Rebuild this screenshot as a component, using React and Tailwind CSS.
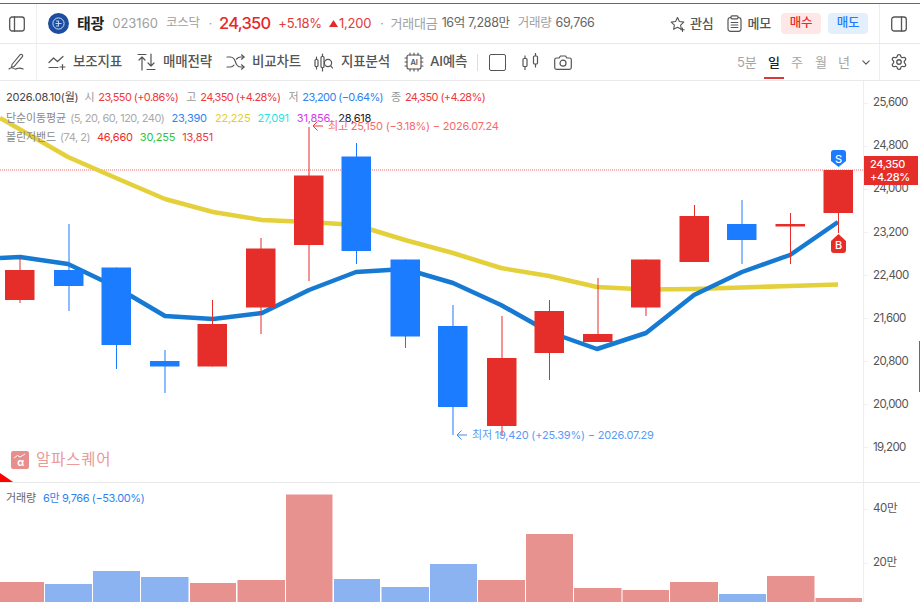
import React from "react";

const R = "#e52d29";
const B = "#1c7cff";
const candles = [
  [5, 270, 300, 258, 303, "r"], [54, 270, 286, 224, 311, "b"], [101.5, 267.5, 345, 267.5, 369, "b"],
  [150, 361, 366.5, 350, 393, "b"], [197.5, 324, 366.5, 300, 366.5, "r"], [246, 248.5, 307.5, 238, 334, "r"],
  [294, 175.5, 245, 127, 281, "r"], [341.5, 156.5, 251, 143, 264, "b"], [390.5, 259.5, 336.5, 259.5, 348, "b"],
  [438, 326, 407, 305, 435, "b"], [487, 358, 426, 316, 436, "r"], [534.5, 311, 353, 300, 380, "r"],
  [583, 334, 342, 278, 342, "r"], [631, 259.5, 307.5, 259.5, 316, "r"], [679.5, 216, 262, 205, 262, "r"],
  [727, 224, 240, 200, 264, "b"], [775.5, 224, 226.5, 213, 264, "r"], [823.5, 170, 213, 170, 233, "r"],
];
const vols = [
  [0, 44, 582, "r"], [45, 47, 584, "b"], [93, 47, 571, "b"], [141, 47.5, 577, "b"], [190, 46, 583, "r"], [237.5, 47.5, 580, "r"],
  [286, 46.5, 494.5, "r"], [334, 46, 579, "b"], [381.5, 47.5, 587, "b"], [430, 47, 564, "b"], [478, 47, 580, "r"], [526, 47, 534, "r"],
  [574, 47.5, 588, "r"], [622.5, 46.5, 590, "r"], [670, 48, 582, "r"], [719, 47, 594, "b"], [767, 47.5, 576, "r"], [815.5, 46.5, 598, "r"],
];
const yellow = "0,118 68,157 116,178 165,199 213,212 262,220 309,222 356,225 405,240 453,253 501,268 549,276 597,287 646,289.5 694,289 742,287.5 790,286 838,284.5";
const blue = "0,258 20,257 68,264 116,287 165,316 213,319 262,313 309,290 356,272 405,269 453,283 501,305 549,332 597,349 646,333 694,295 742,272 790,255 838,222";
const priceTicks = ["25,600", "24,800", "24,000", "23,200", "22,400", "21,600", "20,800", "20,000", "19,200"];

const Ic = ({ w = 18, h = 18, vb = "0 0 18 18", children, className = "" }) => (
  <svg width={w} height={h} viewBox={vb} fill="none" stroke="#555" strokeWidth="1.2" strokeLinecap="round" strokeLinejoin="round" className={`shrink-0 ${className}`}>{children}</svg>
);

const PanelIcon = ({ right }) => (
  <Ic w={16} h={16} vb="0 0 16 16">
    <rect x="0.7" y="1" width="14.6" height="14" rx="2.5" strokeWidth="1.3" />
    <path d={right ? "M10.5 1v14" : "M5.5 1v14"} strokeWidth="1.3" />
  </Ic>
);

const Tool = ({ icon, label, cls }) => (
  <div className={`flex items-center ${cls}`}>
    {icon}
    <span className="text-[13.5px] font-medium text-[#555] whitespace-nowrap leading-none">{label}</span>
  </div>
);

const Leg = ({ c, children, cls = "" }) => <span className={`whitespace-nowrap ${cls}`} style={{ color: c }}>{children}</span>;

export default function App() {
  return (
    <div className="relative w-[920px] h-[602px] overflow-hidden bg-white flex flex-col font-[Inter,'Noto_Sans_CJK_KR',sans-serif] tracking-[-0.2px]">
      <div className="mt-[3px] h-px bg-[#d8393a] shrink-0" />
      {/* row 1 */}
      <div className="h-[40px] shrink-0 flex border-b border-[#e8e8e8]">
        <div className="w-[37px] border-r border-[#eeeeee] flex items-center justify-center pr-[3px]"><PanelIcon /></div>
        <div className="flex-1 flex items-center pl-[11px]">
          <svg width="21" height="21" viewBox="0 0 21 21" className="shrink-0">
            <circle cx="10.5" cy="10.5" r="10.5" fill="#1c4da1" />
            <circle cx="10.5" cy="10.5" r="5.6" fill="none" stroke="#cfe0f5" strokeWidth="1" />
            <path d="M7.5 10.5h6M10.5 7.5v6M8 8h2M8 13h2" stroke="#cfe0f5" strokeWidth="0.9" fill="none" />
          </svg>
          <span className="ml-[8px] text-[15px] font-semibold text-[#222] leading-none whitespace-nowrap">태광</span>
          <span className="ml-[8px] text-[13px] text-[#a0a0a0] leading-none whitespace-nowrap tracking-normal">023160</span>
          <span className="ml-[8px] text-[12.5px] text-[#a0a0a0] leading-none whitespace-nowrap">코스닥</span>
          <span className="ml-[9px] text-[12px] text-[#999] leading-none">·</span>
          <span className="ml-[7px] text-[16.5px] font-medium text-[#e5282a] leading-none whitespace-nowrap tracking-[-0.8px]">24,350</span>
          <span className="ml-[8px] text-[13px] text-[#e5383a] leading-none whitespace-nowrap">+5.18%</span>
          <svg width="9" height="7" viewBox="0 0 9 7" className="ml-[7px] mr-[1px] shrink-0"><path d="M4.5 0L9 7H0z" fill="#e5282a" /></svg>
          <span className="text-[13px] text-[#e5383a] leading-none whitespace-nowrap">1,200</span>
          <span className="ml-[9px] text-[12px] text-[#999] leading-none">·</span>
          <span className="ml-[7px] text-[13px] text-[#a0a0a0] leading-none whitespace-nowrap">거래대금</span>
          <span className="ml-[4px] text-[12.5px] text-[#666] leading-none whitespace-nowrap tracking-[-0.35px]">16억 7,288만</span>
          <span className="ml-[8px] text-[12.5px] text-[#a0a0a0] leading-none whitespace-nowrap">거래량</span>
          <span className="ml-[4px] text-[12.5px] text-[#666] leading-none whitespace-nowrap tracking-[-0.35px]">69,766</span>
          <div className="ml-auto flex items-center">
            <svg width="16" height="16" viewBox="0 0 16 16" fill="none" stroke="#555" strokeWidth="1.1" strokeLinejoin="round" strokeLinecap="round" className="shrink-0">
              <path d="M7.5 1.5l1.9 4 4.4.6-3.2 3 .8 4.2-3.9-2.1-3.9 2.1.8-4.2-3.2-3 4.4-.6z" />
              <path d="M12.5 12v3.4M10.8 13.7h3.4" />
            </svg>
            <span className="ml-[4px] text-[13px] font-medium text-[#555] leading-none">관심</span>
            <svg width="15" height="17" viewBox="0 0 15 17" fill="none" stroke="#555" strokeWidth="1.2" strokeLinecap="round" className="ml-[14px] shrink-0">
              <rect x="1" y="2.5" width="13" height="13.8" rx="2.5" />
              <rect x="4" y="0.8" width="7" height="3" rx="1" fill="#fff" />
              <path d="M4.2 7.5h6.6M4.2 10h6.6M4.2 12.5h6.6" />
            </svg>
            <span className="ml-[5px] text-[13px] font-medium text-[#555] leading-none">메모</span>
            <div className="ml-[10px] w-[40px] h-[21px] rounded-[4px] bg-[#fde8e7] flex items-center justify-center text-[12.5px] font-medium text-[#f0292c]">매수</div>
            <div className="ml-[7px] mr-[11px] w-[40px] h-[21px] rounded-[4px] bg-[#e3effd] flex items-center justify-center text-[12.5px] font-medium text-[#1c7cff]">매도</div>
          </div>
        </div>
        <div className="w-[41px] border-l border-[#eeeeee] flex items-center justify-center pr-[2px]"><PanelIcon right /></div>
      </div>
      {/* row 2 */}
      <div className="h-[37px] shrink-0 flex border-b border-[#e8e8e8] relative">
        <div className="w-[37px] border-r border-[#eeeeee] flex items-center justify-center pr-[3px]">
          <svg width="17" height="18" viewBox="0 0 17 18" fill="none" stroke="#555" strokeWidth="1.1" strokeLinecap="round" strokeLinejoin="round">
            <path d="M4 11.5L12.2 1.6a1.2 1.2 0 0 1 1.7-.1l.4.4a1.2 1.2 0 0 1 .1 1.7L6.2 13.4l-2.7.9z" />
            <path d="M1 16c2-1.6 3.4-1.6 4.6-.6 1.2.9 2.4.9 3.6.2 1.2-.6 3-.7 6 .4" />
          </svg>
        </div>
        <div className="flex-1 flex items-center pl-[11px]">
          <Tool cls="w-[89px]" label="보조지표" icon={
            <Ic w={18} h={16} vb="0 0 18 16" className="mr-[7px]">
              <path d="M1 8.5l4.5-4.5 4 3.5L15 2.5" /><path d="M1 13.5h9" /><path d="M14.5 10.5v5M12 13h5" />
            </Ic>} />
          <Tool cls="w-[89px]" label="매매전략" icon={
            <Ic w={20} h={18} vb="0 0 20 18" className="mr-[6px]">
              <path d="M1 1.5h8" /><path d="M5 4v13M2 7l3-3 3 3" /><path d="M14 1v12M11 10l3 3 3-3" /><path d="M10 16.5h8" />
            </Ic>} />
          <Tool cls="w-[88px]" label="비교차트" icon={
            <Ic w={19} h={16} vb="0 0 19 16" className="mr-[7px]">
              <path d="M1 3h3.5c2 0 3 1 4 2.5l2 5c1 1.5 2 2.5 4 2.5H18" /><path d="M1 13h3.5c1.6 0 2.6-.7 3.5-1.8M10.6 5c1-1.2 2-2 3.9-2H18" /><path d="M15.5.8L18 3l-2.5 2.2M15.5 10.8L18 13l-2.5 2.2" />
            </Ic>} />
          <Tool cls="w-[90px]" label="지표분석" icon={
            <Ic w={19} h={19} vb="0 0 19 19" className="mr-[8px]">
              <rect x="1" y="6.5" width="3" height="7" rx="1" /><path d="M2.5 4v2.5M2.5 13.5V16" />
              <rect x="7" y="3.5" width="3" height="11" rx="1" /><path d="M8.5 1v2.5M8.5 14.5V18" />
              <circle cx="14" cy="10" r="3.6" /><path d="M16.6 12.6L18.5 15" />
            </Ic>} />
          <Tool cls="w-[73px]" label="AI예측" icon={
            <svg width="20" height="20" viewBox="0 0 20 20" fill="none" stroke="#555" strokeWidth="1.1" strokeLinecap="round" className="mr-[6px] shrink-0">
              <rect x="3" y="3" width="14" height="14" rx="2" />
              <path d="M6 1v2M10 1v2M14 1v2M6 17v2M10 17v2M14 17v2M1 6h2M1 10h2M1 14h2M17 6h2M17 10h2M17 14h2" />
              <text x="10" y="13" textAnchor="middle" fontSize="7.5" fontWeight="600" fill="#555" stroke="none">AI</text>
            </svg>} />
          <div className="w-px h-[17px] bg-[#dddddd]" />
          <div className="ml-[11px] w-[17px] h-[17px] rounded-[2px] border-[1.3px] border-[#555]" />
          <svg width="17" height="18" viewBox="0 0 17 18" fill="none" stroke="#555" strokeWidth="1.2" className="ml-[16px] shrink-0">
            <rect x="1" y="5.5" width="4" height="8" rx="1" /><path d="M3 2.5v3M3 13.5v3.5" />
            <rect x="11.5" y="3" width="4" height="8" rx="1" /><path d="M13.5 0v3M13.5 11v3.5" />
          </svg>
          <svg width="18" height="15" viewBox="0 0 18 15" fill="none" stroke="#555" strokeWidth="1.2" strokeLinejoin="round" className="ml-[15px] shrink-0">
            <path d="M2.5 3h2.7l1.2-2h5.2l1.2 2h2.7A1.8 1.8 0 0 1 17.3 4.8v7.7a1.8 1.8 0 0 1-1.8 1.8h-13A1.8 1.8 0 0 1 .7 12.5V4.8A1.8 1.8 0 0 1 2.5 3z" />
            <circle cx="9" cy="8.2" r="3" />
          </svg>
          <div className="ml-auto flex items-center text-[13px] leading-none mr-[9px]">
            <span className="w-[20px] text-[#a5a5a5] whitespace-nowrap">5분</span>
            <span className="ml-[11px] w-[12px] text-[#222] font-medium relative">일<span className="absolute left-[-4px] top-[21.5px] w-[20px] h-[2px] bg-[#d8393a]" /></span>
            <span className="ml-[11px] w-[12px] text-[#a5a5a5]">주</span>
            <span className="ml-[12px] w-[12px] text-[#a5a5a5]">월</span>
            <span className="ml-[11px] w-[12px] text-[#a5a5a5]">년</span>
            <svg width="8" height="5" viewBox="0 0 10 6" fill="none" stroke="#555" strokeWidth="1.4" strokeLinecap="round" strokeLinejoin="round" className="ml-[12px]"><path d="M1 1l4 4 4-4" /></svg>
          </div>
        </div>
        <div className="w-[41px] border-l border-[#eeeeee] flex items-center justify-center pr-[2px]">
          <svg width="18" height="18" viewBox="0 0 24 24" fill="none" stroke="#555" strokeWidth="1.7" strokeLinecap="round" strokeLinejoin="round">
            <path d="M9.671 4.136a2.34 2.34 0 0 1 4.659 0 2.34 2.34 0 0 0 3.319 1.915 2.34 2.34 0 0 1 2.33 4.033 2.34 2.34 0 0 0 0 3.831 2.34 2.34 0 0 1-2.33 4.033 2.34 2.34 0 0 0-3.319 1.915 2.34 2.34 0 0 1-4.659 0 2.34 2.34 0 0 0-3.32-1.915 2.34 2.34 0 0 1-2.33-4.033 2.34 2.34 0 0 0 0-3.831A2.34 2.34 0 0 1 6.35 6.051a2.34 2.34 0 0 0 3.319-1.915" />
            <circle cx="12" cy="12" r="3" />
          </svg>
        </div>
      </div>
      {/* price pane */}
      <div className="h-[401px] shrink-0 flex border-b border-[#e8e8e8] box-content">
        <div className="relative w-[863px] shrink-0">
          <svg width="863" height="401" viewBox="0 81 863 401" className="block">
            <path d="M0 473L13 482H0z" fill="#ff0000" />
            <path d="M0 170H863" stroke="#ee6a6a" strokeWidth="1" strokeDasharray="1 1" />
            <polyline points={yellow} fill="none" stroke="#e4d03a" strokeWidth="4.5" strokeLinejoin="round" />
            <polyline points={blue} fill="none" stroke="#1679d2" strokeWidth="4.5" strokeLinejoin="round" />
            {candles.map(([x, t, b, wt, wb, c], i) => {
              const col = c === "r" ? R : B;
              return (
                <g key={i}>
                  <rect x={x + 14.5} y={wt} width="1" height={wb - wt} fill={col} />
                  <rect x={x} y={t} width="29.5" height={b - t} fill={col} />
                </g>
              );
            })}
            <path d="M313 126h10M317.5 121.5L313 126l4.5 4.5" stroke="#ee3a3a" strokeWidth="1" fill="none" />
            <path d="M457 435h10M461.5 430.5L457 435l4.5 4.5" stroke="#3d8df5" strokeWidth="1" fill="none" />
            <path d="M831 153a3 3 0 0 1 3-3h9a3 3 0 0 1 3 3v8l-7.5 6-7.5-6z" fill="#1c7cff" />
            <text x="838.5" y="162.5" textAnchor="middle" fontSize="11" fontWeight="500" fill="#fff">S</text>
            <path d="M831 241l7.5-7 7.5 7v9a3 3 0 0 1-3 3h-9a3 3 0 0 1-3-3z" fill="#e52d29" />
            <text x="838.5" y="249" textAnchor="middle" fontSize="11" fontWeight="500" fill="#fff">B</text>
          </svg>
          {/* legend overlay */}
          <div className="absolute left-[6px] top-[9px] flex flex-col text-[11px] leading-[14px] tracking-[-0.2px]">
            <div className="flex h-[21px] items-start">
              <Leg c="#444" cls="tracking-[-0.2px]">2026.08.10(월)</Leg>
              <Leg c="#999" cls="ml-[6px]">시</Leg><Leg c="#f0393c" cls="ml-[4px] tracking-[-0.6px]">23,550 (+0.86%)</Leg>
              <Leg c="#999" cls="ml-[8px]">고</Leg><Leg c="#f0393c" cls="ml-[4px] tracking-[-0.6px]">24,350 (+4.28%)</Leg>
              <Leg c="#999" cls="ml-[8px]">저</Leg><Leg c="#2f83f0" cls="ml-[4px] tracking-[-0.6px]">23,200 (−0.64%)</Leg>
              <Leg c="#999" cls="ml-[8px]">종</Leg><Leg c="#f0393c" cls="ml-[4px] tracking-[-0.6px]">24,350 (+4.28%)</Leg>
            </div>
            <div className="flex h-[19px] items-start">
              <Leg c="#888" cls="tracking-[-0.1px]">단순이동평균</Leg><Leg c="#aaa" cls="ml-[4px] tracking-[-0.5px]">(5, 20, 60, 120, 240)</Leg>
              <Leg c="#2f83f0" cls="ml-[7px]">23,390</Leg><Leg c="#e4ce2c" cls="ml-[8px]">22,225</Leg>
              <Leg c="#1fe6e6" cls="ml-[7px]">27,091</Leg><Leg c="#d63af0" cls="ml-[8px]">31,856</Leg><Leg c="#222" cls="ml-[8px]">28,618</Leg>
            </div>
            <div className="flex h-[19px] items-start">
              <Leg c="#888" cls="tracking-[-0.1px]">볼린저밴드</Leg><Leg c="#aaa" cls="ml-[4px] tracking-[-0.5px]">(74, 2)</Leg>
              <Leg c="#f0292c" cls="ml-[7px]">46,660</Leg><Leg c="#2fc43f" cls="ml-[7px]">30,255</Leg><Leg c="#f0393c" cls="ml-[7px]">13,851</Leg>
            </div>
          </div>
          <span className="absolute left-[328px] top-[38px] text-[11px] leading-[14px] text-[#f76a6a] whitespace-nowrap tracking-[-0.22px]">최고 25,150 (−3.18%) − 2026.07.24</span>
          <span className="absolute left-[472px] top-[347px] text-[11px] leading-[14px] text-[#5a9bf5] whitespace-nowrap tracking-[-0.2px]">최저 19,420 (+25.39%) − 2026.07.29</span>
          <div className="absolute left-[11px] top-[370px] flex items-center">
            <svg width="18" height="18" viewBox="0 0 18 18" className="shrink-0">
              <rect width="18" height="18" rx="2" fill="#e88f8e" />
              <path d="M3 7l3.5-2.5 2.5 1.5 5-3" stroke="#fff" strokeWidth="1" fill="none" />
              <text x="9.5" y="15" textAnchor="middle" fontSize="10" fontWeight="700" fill="#fff">α</text>
            </svg>
            <span className="ml-[7px] text-[15.5px] leading-none text-[#e99a99] tracking-[0.8px] whitespace-nowrap">알파스퀘어</span>
          </div>
        </div>
        <div className="relative flex-1 border-l border-[#eeeeee] flex flex-col gap-[23.1px] pt-[12px] overflow-visible">
          {priceTicks.map((p) => (
            <div key={p} className="h-[20px] flex items-center shrink-0">
              <span className="w-[4px] h-px bg-[#f0f0f0]" />
              <span className="ml-[5px] text-[11.5px] text-[#555] leading-none tracking-[-0.6px]">{p}</span>
            </div>
          ))}
          <div className="absolute left-0 top-[75px] w-[54px] h-[29px] bg-[#e52d29] pl-[6px] pt-[2px] text-[11px] leading-[13px] font-medium text-white tracking-[-0.4px]">
            <div>24,350</div><div>+4.28%</div>
          </div>
        </div>
      </div>
      {/* volume pane */}
      <div className="flex-1 flex min-h-0">
        <div className="relative w-[863px] shrink-0">
          <svg width="863" height="119" viewBox="0 483 863 119" className="block">
            {vols.map(([x, w, t, c], i) => (
              <rect key={i} x={x} y={t} width={w} height={602 - t} fill={c === "r" ? "#e89290" : "#8cb3f1"} />
            ))}
          </svg>
          <div className="absolute left-[6px] top-[8px] flex text-[11px] leading-[14px] tracking-[-0.4px]">
            <Leg c="#666" cls="tracking-[-0.1px]">거래량</Leg>
            <Leg c="#2f83f0" cls="ml-[7px]">6만 9,766 (−53.00%)</Leg>
          </div>
        </div>
        <div className="flex-1 border-l border-[#eeeeee] flex flex-col gap-[34px] pt-[16px]">
          {["40만", "20만"].map((p) => (
            <div key={p} className="h-[20px] flex items-center shrink-0">
              <span className="w-[4px] h-px bg-[#f0f0f0]" />
              <span className="ml-[5px] text-[11.5px] text-[#555] leading-none tracking-[-0.4px]">{p}</span>
            </div>
          ))}
        </div>
      </div>
      <div className="absolute right-0 top-[341px] w-px h-[51px] bg-[#c8403f]" />
    </div>
  );
}
